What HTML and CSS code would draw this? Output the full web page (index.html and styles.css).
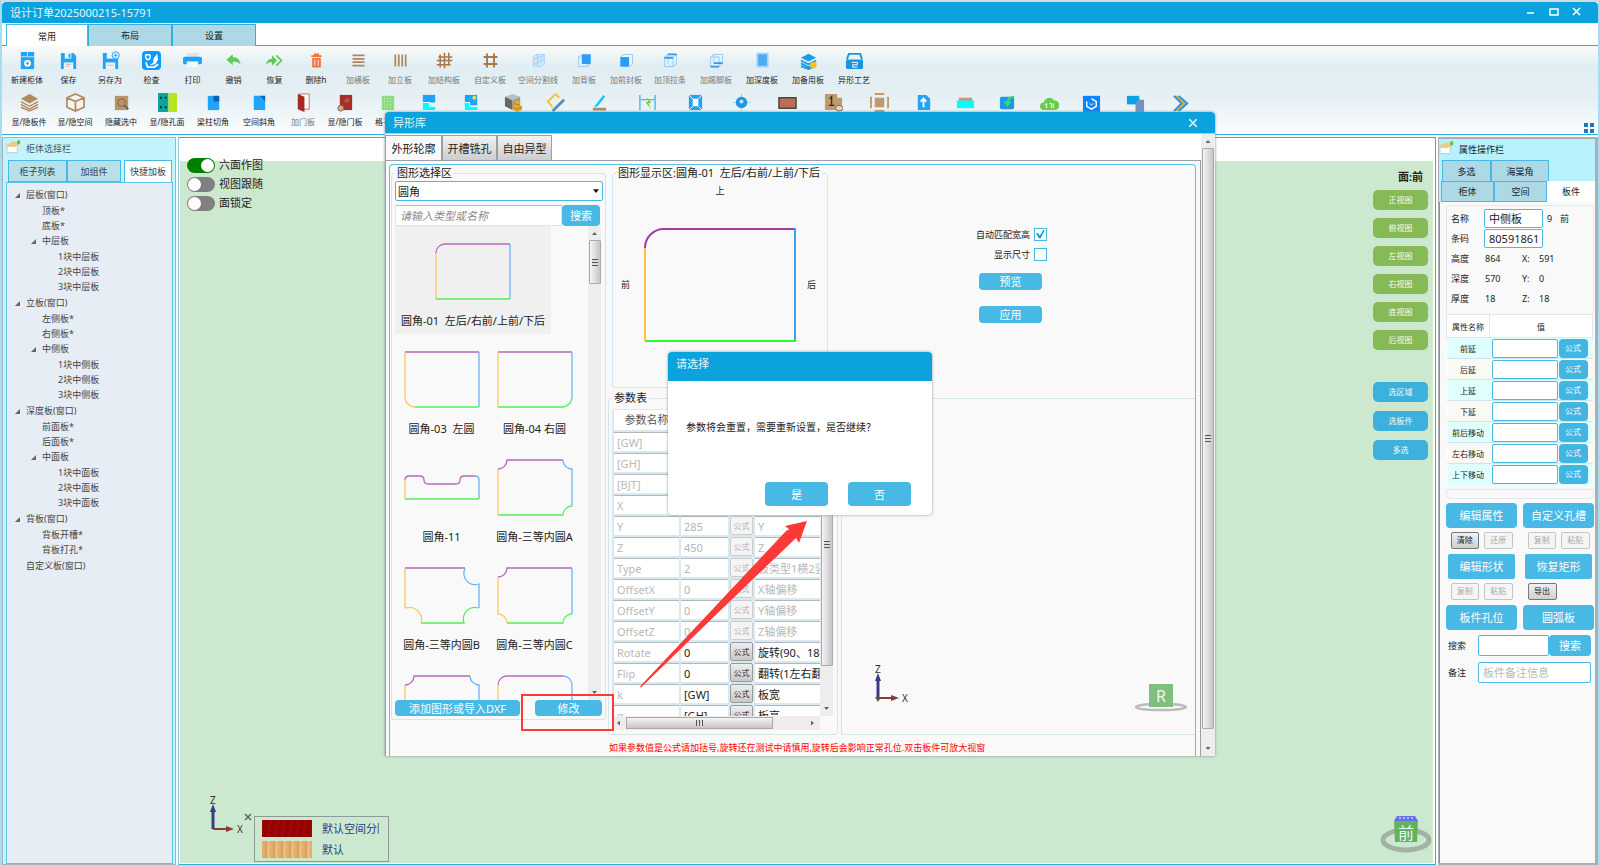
FILE: index.html
```html
<!DOCTYPE html>
<html lang="zh-CN">
<head>
<meta charset="utf-8">
<title>设计订单2025000215-15791</title>
<link rel="stylesheet" href="styles.css">
</head>
<body>
<div class="app">
  <header class="titlebar">
    <h1>设计订单2025000215-15791</h1>
    <div class="win-buttons">
      <button aria-label="最小化"><svg viewBox="0 0 10 10"><path d="M1 6h7" stroke="#fff" stroke-width="1.5"/></svg></button>
      <button aria-label="最大化"><svg viewBox="0 0 10 10"><path d="M1 2h8v6H1z" fill="none" stroke="#fff" stroke-width="1.5"/></svg></button>
      <button aria-label="关闭"><svg viewBox="0 0 10 10"><path d="M1 1l7 7M8 1l-7 7" stroke="#fff" stroke-width="1.5"/></svg></button>
    </div>
  </header>
  <nav class="menu-tabs">
    <button class="on">常用</button><button>布局</button><button>设置</button>
  </nav>

  <section class="toolbar">
    <div class="tool-row">
      <button class="tool"><svg viewBox="0 0 20 20"><path d="M3 1h14v18H3z" fill="#1fa4fb"/><path d="M3 6h14M10 1v5" stroke="#bfe4fd"/><circle cx="10" cy="13" r="3.6" fill="#fff"/><path d="M10 11v4M8 13h4" stroke="#1fa4fb"/></svg>新建柜体</button>
      <button class="tool w41"><svg viewBox="0 0 20 20"><path d="M2 2h13l3 3v14H2z" fill="#1fa4fb"/><path d="M6 2h7v6H6z" fill="#eaf4fa"/><path d="M10 3h2v4h-2z" fill="#1fa4fb"/><path d="M5 12h10v7H5z" fill="#eef3f5"/><path d="M7 14h6M7 16h4" stroke="#bbb"/></svg>保存</button>
      <button class="tool"><svg viewBox="0 0 20 20"><path d="M2 2h13l3 3v14H2z" fill="#1fa4fb"/><path d="M6 2h7v6H6z" fill="#eaf4fa"/><path d="M5 12h10v7H5z" fill="#eef3f5"/><path d="M7 15h6" stroke="#bbb"/><circle cx="15.500" cy="4.500" r="3.800" fill="#e8f5ff" stroke="#1fa4fb"/><path d="M15.500 2.500v4M13.500 4.500h4" stroke="#1fa4fb"/></svg>另存为</button>
      <button class="tool w41"><svg viewBox="0 0 20 20"><rect x="0" y="0" width="20" height="20" rx="4" fill="#0f9bfb"/><path d="M4 4h4q2 3-1 5H5q-2-3-1-5z" fill="none" stroke="#fff" stroke-width="1.500"/><path d="M9 9l3-2M12 8l4-5 1 6-3 5-6 1 4-3z" fill="#fff"/><path d="M4 12l2 5h7l4-3" fill="none" stroke="#fff" stroke-width="1.800"/></svg>检查</button>
      <button class="tool w41"><svg viewBox="0 0 20 20"><path d="M4 2h12v5H4z" fill="#dde3e6"/><rect y="6" width="20" height="8" rx="2" fill="#1fa4fb"/><path d="M4 11h12v6H4z" fill="#f5f7f8"/></svg>打印</button>
      <button class="tool w41"><svg viewBox="-2 -1 24 24"><path d="M1 10l8-7v4c6 0 9 3 10 9-3-3-6-4-10-3v4z" fill="#62c956"/></svg>撤销</button>
      <button class="tool w41"><svg viewBox="-1 -1 22 22"><path d="M13 10L7 4v4c-4 0-6 3-7 7 3-3 4-3 7-3v4z" fill="#62c956"/><path d="M12 4l6 6-6 6" fill="none" stroke="#62c956" stroke-width="2"/></svg>恢复</button>
      <button class="tool"><svg viewBox="-1 -1 22 22"><path d="M4 5h12M8 4V3h4v1" stroke="#f4713c" stroke-width="2" fill="none"/><path d="M5 7h10v11H5z" fill="#f4713c"/><path d="M8 9v7M12 9v7" stroke="#fff"/></svg>删除h</button>
      <button class="tool dim"><svg viewBox="-1 -1 22 22"><path d="M3 4h14M3 8h14M3 12h14M3 16h14" stroke="#ab8764" stroke-width="2"/></svg>加横板</button>
      <button class="tool dim"><svg viewBox="-1 -1 22 22"><path d="M4 3v14M8 3v14M12 3v14M16 3v14" stroke="#ab8764" stroke-width="2"/></svg>加立板</button>
      <button class="tool w46 dim"><svg viewBox="-1 -1 22 22"><path d="M5 3v15M10 1v18M15 1v15M3 6h16M1 10h18M1 15h16" stroke="#ab7747" stroke-width="1.800"/></svg>加结构板</button>
      <button class="tool w46 dim"><svg viewBox="-1 -1 22 22"><path d="M6 2v16M14 2v16M2 6h16M2 14h16" stroke="#ab7747" stroke-width="2.200"/></svg>自定义板</button>
      <button class="tool w50 dim"><svg viewBox="-1 -1 22 22"><path d="M4 6l3-3h10v11l-3 3H4z" fill="#cfe6fa" stroke="#9fcdf7" stroke-dasharray="3 1"/><path d="M4 9l13-5M4 15L17 8M9 17V3" stroke="#9fcdf7"/></svg>空间分割线</button>
      <button class="tool dim"><svg viewBox="-1 -1 22 22"><path d="M3 6l4-3h10v11l-4 3H3zM3 6h10v11" fill="none" stroke="#8fc7f8"/><path d="M7 3h10v11H7z" fill="#2b9cf7"/></svg>加背板</button>
      <button class="tool dim"><svg viewBox="-1 -1 22 22"><path d="M3 6l4-3h10v11l-4 3H3z" fill="#eef6fd" stroke="#8fc7f8"/><path d="M3 6h10v11H3z" fill="#2b9cf7"/></svg>加前封板</button>
      <button class="tool w46 dim"><svg viewBox="-1 -1 22 22"><path d="M3 6l4-3h10v11l-4 3H3zM3 6h10v11M7 3v11M13 6l4-3" fill="none" stroke="#8fc7f8"/><path d="M3 7h10M7 3h10" stroke="#2b9cf7" stroke-width="2"/></svg>加顶拉条</button>
      <button class="tool w46 dim"><svg viewBox="-1 -1 22 22"><path d="M3 6l4-3h10v11l-4 3H3zM3 6h10v11M7 3v11" fill="none" stroke="#8fc7f8"/><path d="M3 17h10M7 13h10" stroke="#2b9cf7" stroke-width="2"/></svg>加踢脚板</button>
      <button class="tool w46"><svg viewBox="-1 -1 22 22"><path d="M4 2h12v15H4z" fill="#4aabf5" stroke="#9fd0f8" stroke-width="2"/></svg>加深度板</button>
      <button class="tool w46"><svg viewBox="0 -1 20 20"><path d="M2 6l8-4 8 4-8 4z" fill="#1a9de6"/><path d="M2 9l8 4 8-4M2 12l8 4 8-4M2 15l8 3 5-2" fill="none" stroke="#1a9de6" stroke-width="2"/><circle cx="15" cy="14" r="3.500" fill="#f1c232"/></svg>加备用板</button>
      <button class="tool w46"><svg viewBox="0 0 20 20"><path d="M2 9l2-6h12l2 6" fill="none" stroke="#1a95dd" stroke-width="2"/><rect x="1" y="9" width="18" height="10" rx="2" fill="#1a95dd"/><path d="M7 12h6v2.500H8V17h5" fill="none" stroke="#fff"/></svg>异形工艺</button>
    </div>
    <div class="tool-row">
      <button class="tool w46"><svg viewBox="0 0 20 20"><path d="M1 6l9-5 9 5-9 5z" fill="#b18a5f"/><path d="M1 9l9 5 9-5M1 12l9 5 9-5M1 15l9 4 9-4" fill="none" stroke="#b18a5f" stroke-width="1.500"/></svg>显/隐板件</button>
      <button class="tool w46"><svg viewBox="0 0 20 20"><path d="M1 5l9-4 9 4v10l-9 4-9-4zM1 5l9 4 9-4M10 9v10" fill="#f7f3ee" stroke="#b18a5f" stroke-width="1.800"/></svg>显/隐空间</button>
      <button class="tool w46"><svg viewBox="0 0 20 20"><path d="M3 3h14v15H3z" fill="#b9946a"/><circle cx="10" cy="10" r="4" fill="none" stroke="#7d5f3f"/><path d="M13 13l4 4" stroke="#7d5f3f" stroke-width="2"/></svg>隐藏选中</button>
      <button class="tool w46"><svg viewBox="0 0 20 20"><path d="M0 0h11v20H0z" fill="#0ea5a1"/><path d="M11 0h9v20h-9z" fill="#b5e61d"/><path d="M3 4v2M8 4v2M3 14v2M8 14v2" stroke="#123" stroke-width="2"/></svg>显/隐孔面</button>
      <button class="tool w46"><svg viewBox="0 0 20 20"><path d="M4 3h12v15H4z" fill="#1fa4fb"/><path d="M10 3h6v6h-6z" fill="#0b62b5"/></svg>梁柱切角</button>
      <button class="tool w46"><svg viewBox="0 0 20 20"><path d="M4 3h6l6 6v9H4z" fill="#1fa4fb"/><path d="M10 3h6v6z" fill="#0b62b5"/></svg>空间斜角</button>
      <button class="tool dim"><svg viewBox="0 0 20 20"><path d="M5 1h11v16H5z" fill="#fff" stroke="#c66"/><path d="M4 1l7 3v16l-7-3z" fill="#a52a20"/></svg>加门板</button>
      <button class="tool"><svg viewBox="0 0 20 20"><path d="M4 2h13v16H4z" fill="#a5302a"/><path d="M9 9l4-4M11 10l3-3" stroke="#e08a80"/><circle cx="5" cy="16" r="3" fill="#cdb28c" stroke="#765"/></svg>显/隐门板</button>
      <button class="tool"><svg viewBox="0 0 20 20"><path d="M4 3h13v15H4z" fill="#86d977"/><path d="M4 6h13M4 9h13M4 12h13M4 15h13M7 3v15M10 3v15M13 3v15" stroke="#b8ecae" stroke-dasharray="1 1"/></svg>格子架</button>
      <button class="tool" aria-label="切割"><svg viewBox="0 0 20 20"><path d="M3 2h13v8H3z" fill="#1fa4fb"/><path d="M3 10h7v4h6v4H3z" fill="#0ff"/><path d="M3 10h7v4h6" stroke="#fff" fill="none"/></svg></button>
      <button class="tool" aria-label="补板"><svg viewBox="0 0 20 20"><path d="M3 2h13v11H3z" fill="#1fa4fb"/><path d="M3 10h5v4h8v4H3z" fill="#0ff"/><path d="M3 10h5v4h8" stroke="#fff" fill="none"/><circle cx="13" cy="5" r="2" fill="#ffe21a"/></svg></button>
      <button class="tool" aria-label="五金"><svg viewBox="0 0 20 20"><path d="M1 4l8-3 8 3-8 4z" fill="#bbb"/><path d="M1 4l8 4v10l-8-4z" fill="#666"/><path d="M9 8l8-4v8l-8 6z" fill="#999"/><path d="M9 14l2-1V9l4-2 2 3v3l2 1v4l-5 2-5-2z" fill="#e8ab24"/><path d="M9 15l5 2 5-2M11 11l6 2" stroke="#b97d10" fill="none"/></svg></button>
      <button class="tool" aria-label="测量"><svg viewBox="0 0 20 20"><path d="M10 1L2 9l5 6" fill="none" stroke="#f2c12e" stroke-width="2"/><path d="M10 1l4 4" stroke="#f2c12e" stroke-width="2"/><path d="M7 19L19 7" stroke="#5b8fb0" stroke-width="3"/></svg></button>
      <button class="tool w46" aria-label="斜切"><svg viewBox="0 0 20 20"><path d="M3 17h14" stroke="#b28a72" stroke-width="3"/><path d="M4 15L14 2l2 2-8 10z" fill="#19c3ff"/></svg></button>
      <button class="tool w50" aria-label="间距"><svg viewBox="0 0 20 20"><path d="M2 2v16M18 2v16M3 7h14" stroke="#5ab3e6" stroke-width="1.500"/><path d="M9 4l5 6-3 1 3 6-6-7 3-1z" fill="#6bd34a"/></svg></button>
      <button class="tool w46" aria-label="边框"><svg viewBox="0 0 20 20"><path d="M3 2h14v16H3z" fill="#1fa4fb"/><path d="M7 6h6v8H7z" fill="#fff"/><path d="M3 2l4 4M17 2l-4 4M3 18l4-4M17 18l-4-4" stroke="#fff"/></svg></button>
      <button class="tool w46" aria-label="定位"><svg viewBox="0 0 20 20"><path d="M10 1v18M1 10h18" stroke="#7fd4fa"/><circle cx="10" cy="10" r="6" fill="#1f97e8"/><circle cx="10" cy="9" r="2" fill="#c9ecff"/></svg></button>
      <button class="tool w46" aria-label="矩形"><svg viewBox="0 0 20 20"><path d="M1 5h18v11H1z" fill="#b97052" stroke="#444" stroke-width="1.500"/></svg></button>
      <button class="tool w46" aria-label="编号"><svg viewBox="0 0 20 20"><path d="M1 1h13v4h5v13H1z" fill="#bf9a6c"/><path d="M6 6l2-2v9M5 13h6" stroke="#333" stroke-width="1.500" fill="none"/><ellipse cx="16" cy="16" rx="4" ry="3" fill="#e5d5ba" stroke="#765"/></svg></button>
      <button class="tool w46" aria-label="封边"><svg viewBox="0 0 20 20"><path d="M5 5h10v10H5z" fill="#bf9a6c"/><path d="M5 1h10M5 19h10M1 4v12M19 4v12" stroke="#bf9a6c" stroke-width="2"/></svg></button>
      <button class="tool" aria-label="导出文件"><svg viewBox="0 0 20 20"><path d="M4 2h9l4 4v12H4z" fill="#1fa4fb"/><path d="M10 15V7M7 9l3-3 3 3" stroke="#fff" stroke-width="2" fill="none"/></svg></button>
      <button class="tool" aria-label="台面"><svg viewBox="0 0 20 20"><path d="M3 5h14v4H3z" fill="#bf9a7c"/><path d="M1 8h18v8H1z" fill="#0ff"/></svg></button>
      <button class="tool" aria-label="导入"><svg viewBox="0 0 20 20"><rect x="2" y="4" width="15" height="13" rx="2" fill="#1f97e8"/><path d="M17 4c-5 0-7 2-7 7M7 9l3 4 3-4" stroke="#33e06d" stroke-width="2" fill="none"/></svg></button>
      <button class="tool" aria-label="云端"><svg viewBox="0 0 20 20"><path d="M4 18a4 4 0 0 1 0-8 6 6 0 0 1 11-2 5 5 0 0 1 1 10z" fill="#6bcb4d"/><path d="M7 16v-5l-2 2M10 11h2v5M14 11v5" stroke="#fff" fill="none"/></svg></button>
      <button class="tool" aria-label="渲染"><svg viewBox="0 0 20 20"><path d="M1 3h18v17H1z" fill="#0a84ff"/><path d="M10 6l5 3v5l-5 3-5-3V9" fill="none" stroke="#fff" stroke-width="1.500"/><path d="M8 11q2 3 4 0" fill="none" stroke="#fff"/></svg></button>
      <button class="tool w46" aria-label="复制板"><svg viewBox="0 0 20 20"><path d="M1 3h13v9H1z" fill="#08a2ea"/><path d="M10 10l3-3h6v13h-9z" fill="#6e93c5"/></svg></button>
      <button class="tool w46" aria-label="更多"><svg viewBox="0 0 20 20"><path d="M2 3h4l9 8-9 8H2l8-8z" fill="#f0a92b"/><path d="M2 3l8 8-8 8M7 3l9 8-9 8" fill="none" stroke="#1f97e8" stroke-width="2"/></svg></button>
    </div>
    <button class="grid-btn" aria-label="布局切换"><svg viewBox="0 0 10 10"><path d="M0 0h4v4H0zM6 0h4v4H6zM0 6h4v4H0zM6 6h4v4H6z" fill="#1f78bd"/></svg></button>
  </section>

  <main class="work">
    <aside class="sidebar">
      <h2 class="panel-title"><svg viewBox="0 0 16 14"><path d="M1 4h11v9H1z" fill="#fff" stroke="#b9cbd6"/><path d="M1 5l6-4h7l1 3-6 3H2z" fill="#f0c987"/><path d="M12 0h3v4h-3z" fill="#5dc24b"/></svg>柜体选择栏</h2>
      <div class="side-tabs"><button>柜子列表</button><button>加组件</button><button class="on">快捷加板</button></div>
      <div class="tree">
        <ul>
          <li><span class="node">层板(窗口)</span>
            <ul><li>顶板*</li><li>底板*</li><li><span class="node">中层板</span><ul><li>1块中层板</li><li>2块中层板</li><li>3块中层板</li></ul></li></ul></li>
          <li><span class="node">立板(窗口)</span>
            <ul><li>左侧板*</li><li>右侧板*</li><li><span class="node">中侧板</span><ul><li>1块中侧板</li><li>2块中侧板</li><li>3块中侧板</li></ul></li></ul></li>
          <li><span class="node">深度板(窗口)</span>
            <ul><li>前面板*</li><li>后面板*</li><li><span class="node">中面板</span><ul><li>1块中面板</li><li>2块中面板</li><li>3块中面板</li></ul></li></ul></li>
          <li><span class="node">背板(窗口)</span>
            <ul><li>背板开槽*</li><li>背板打孔*</li></ul></li>
          <li>自定义板(窗口)</li>
        </ul>
      </div>
    </aside>

    <section class="viewport">
      <div class="view-head"></div>
      <div class="canvas">
        <div class="toggles">
          <label><input type="checkbox" checked>六面作图</label>
          <label><input type="checkbox">视图跟随</label>
          <label><input type="checkbox">面锁定</label>
        </div>
        <div class="view-side">
          <strong>面:前</strong>
          <div class="view-btns green"><button>正视图</button><button>俯视图</button><button>左视图</button><button>右视图</button><button>底视图</button><button>后视图</button></div>
          <div class="view-btns blue"><button>选区域</button><button>选板件</button><button>多选</button></div>
        </div>
        <div class="canvas-foot">
          <svg class="axis" viewBox="0 0 40 44"><path d="M7 35V16" stroke="#3a3a86" stroke-width="3"/><path d="M4 18l3-8 3 8z" fill="#3a3a86"/><path d="M7 35h16" stroke="#8a3c3c" stroke-width="2"/><path d="M20 32l8 3-8 3z" fill="#8a3c3c"/><text x="4" y="10">Z</text><text x="31" y="39">X</text></svg>
          <button class="legend-close" aria-label="关闭图例"><svg viewBox="0 0 8 8"><path d="M1 1l6 6M7 1L1 7" stroke="#555" stroke-width="1.200"/></svg></button>
          <div class="legend"><div><i class="sw red"></i><span>默认空间分隔</span></div><div><i class="sw wood"></i><span>默认</span></div></div>
          <svg class="cube" viewBox="0 0 54 40"><ellipse cx="27" cy="25" rx="23" ry="10" fill="none" stroke="#a3b3a3" stroke-width="5"/><path d="M18 1h18l3 5H15z" fill="#6670ea"/><path d="M20 3h14" stroke="#fff" stroke-dasharray="2 2"/><path d="M15 6h24l-1 21H16z" fill="#5fb45f"/><text x="19" y="24" class="cube-text">前</text></svg>
        </div>
      </div>
    </section>

    <aside class="props">
      <div class="props-head">
        <h2 class="panel-title"><svg viewBox="0 0 16 14"><path d="M1 4h11v9H1z" fill="#fff" stroke="#b9cbd6"/><path d="M1 5l6-4h7l1 3-6 3H2z" fill="#f0c987"/><path d="M12 0h3v4h-3z" fill="#5dc24b"/></svg>属性操作栏</h2>
        <div class="prop-tabs first"><button>多选</button><button>海棠角</button></div>
        <div class="prop-tabs"><button>柜体</button><button>空间</button><button class="on">板件</button></div>
      </div>
      <div class="props-body">
        <div class="info">
          <label for="p-name">名称</label><input id="p-name" value="中侧板"><span class="tail">9</span><span>前</span>
          <label for="p-code">条码</label><input id="p-code" value="80591861"><span></span><span></span>
          <span>高度</span><span class="num">864</span><span class="ax">X:</span><span>591</span>
          <span>深度</span><span class="num">570</span><span class="ax">Y:</span><span>0</span>
          <span>厚度</span><span class="num">18</span><span class="ax">Z:</span><span>18</span>
        </div>
        <table class="attr">
          <colgroup><col class="a1"><col class="a2"><col></colgroup>
          <thead><tr><th>属性名称</th><th colspan="2">值</th></tr></thead>
          <tbody>
            <tr><td>前延</td><td><input aria-label="前延"></td><td><button>公式</button></td></tr>
            <tr><td>后延</td><td><input aria-label="后延"></td><td><button>公式</button></td></tr>
            <tr><td>上延</td><td><input aria-label="上延"></td><td><button>公式</button></td></tr>
            <tr><td>下延</td><td><input aria-label="下延"></td><td><button>公式</button></td></tr>
            <tr><td>前后移动</td><td><input aria-label="前后移动"></td><td><button>公式</button></td></tr>
            <tr><td>左右移动</td><td><input aria-label="左右移动"></td><td><button>公式</button></td></tr>
            <tr><td>上下移动</td><td><input aria-label="上下移动"></td><td><button>公式</button></td></tr>
          </tbody>
        </table>
        <div class="strip"></div>
        <div class="acts">
          <button class="big">编辑属性</button><button class="big">自定义孔槽</button>
          <div class="minis"><button>清除</button><button disabled>还原</button></div><div class="minis"><button disabled>复制</button><button disabled>粘贴</button></div>
          <button class="big square">编辑形状</button><button class="big square">恢复矩形</button>
          <div class="minis"><button disabled>复制</button><button disabled>粘贴</button></div><div class="minis"><button>导出</button></div>
          <button class="big">板件孔位</button><button class="big">圆弧板</button>
        </div>
        <div class="line"><label for="p-search">搜索</label><input id="p-search"><button>搜索</button></div>
        <div class="line"><label for="p-note">备注</label><input id="p-note" placeholder="板件备注信息"></div>
      </div>
    </aside>
  </main>
</div>

<section class="dialog" role="dialog" aria-label="异形库">
  <header class="dialog-title"><h2>异形库</h2><button aria-label="关闭"><svg viewBox="0 0 8 8"><path d="M0 0l8 8M8 0L0 8" stroke="#e6f6fd" stroke-width="1.500"/></svg></button></header>
  <div class="dialog-body">
    <div class="dialog-main">
      <div class="dialog-tabs"><button class="on">外形轮廓</button><button>开槽铣孔</button><button>自由异型</button></div>
      <div class="page"><div class="frame">
        <fieldset class="picker">
          <legend>图形选择区</legend>
          <div class="combo"><select aria-label="图形类别"><option>圆角</option></select><svg viewBox="0 0 8 5"><path d="M0 0h8L4 5z" fill="#111"/></svg></div>
          <div class="find"><input placeholder="请输入类型或名称" aria-label="类型或名称"><button>搜索</button></div>
          <div class="list-wrap">
            <div class="shapes">
              <div class="shape sel"><svg viewBox="0 0 76 57"><path class="p" d="M1 10a9 9 0 0 1 9-9h65"/><path class="b" d="M75 1v55"/><path class="g" d="M75 56H1"/><path class="o" d="M1 56V10"/></svg><span>圆角-01&nbsp; 左后/右前/上前/下后</span></div>
              <div class="shape"><svg viewBox="0 0 76 57"><path class="p" d="M1 1h74"/><path class="b" d="M75 1v55"/><path class="g" d="M75 56H11"/><path class="o" d="M11 56a10 10 0 0 1-10-10V1"/></svg><span>圆角-03&nbsp; 左圆</span></div>
              <div class="shape"><svg viewBox="0 0 76 57"><path class="p" d="M1 1h74"/><path class="b" d="M75 1v45"/><path class="g" d="M75 46a10 10 0 0 1-10 10H1"/><path class="o" d="M1 56V1"/></svg><span>圆角-04 右圆</span></div>
              <div class="shape"><svg viewBox="0 0 76 57"><path class="p" d="M1 21q0-4 4-4h11q4 0 4 4 0 4 4 4h28q4 0 4-4 0-4 4-4h11"/><path class="b" d="M71 17q4 0 4 4v19"/><path class="g" d="M75 40H1"/><path class="o" d="M1 40V21"/></svg><span>圆角-11</span></div>
              <div class="shape"><svg viewBox="0 0 76 57"><path class="p" d="M1 10a9 9 0 0 0 9-9h56"/><path class="b" d="M66 1a9 9 0 0 0 9 9v37"/><path class="g" d="M75 47a9 9 0 0 0-9 9H1"/><path class="o" d="M1 56V10"/></svg><span>圆角-三等内圆A</span></div>
              <div class="shape"><svg viewBox="0 0 76 57"><path class="p" d="M1 1h60"/><path class="b" d="M61 1c-4 10 4 19 14 16v24"/><path class="g" d="M75 41c-10-3-18 6-15 15H17"/><path class="o" d="M17 56c3-9-6-18-16-15V1"/></svg><span>圆角-三等内圆B</span></div>
              <div class="shape"><svg viewBox="0 0 76 57"><path class="p" d="M1 10a9 9 0 0 0 9-9h65"/><path class="b" d="M75 1v46"/><path class="g" d="M75 47a9 9 0 0 0-9 9H10"/><path class="o" d="M10 56a9 9 0 0 0-9-9V10"/></svg><span>圆角-三等内圆C</span></div>
              <div class="shape"><svg viewBox="0 0 76 57"><path class="p" d="M1 10a9 9 0 0 0 9-9h56"/><path class="b" d="M66 1a9 9 0 0 0 9 9v46"/><path class="g" d="M75 56H1"/><path class="o" d="M1 56V10"/></svg></div>
              <div class="shape"><svg viewBox="0 0 76 57"><path class="p" d="M1 10a9 9 0 0 1 9-9h56"/><path class="b" d="M66 1a9 9 0 0 1 9 9v46"/><path class="g" d="M75 56H1"/><path class="o" d="M1 56V10"/></svg></div>
            </div>
            <div class="vbar"><i class="up"></i><i class="thumb short"></i><i class="down"></i></div>
          </div>
          <div class="pick-acts"><button>添加图形或导入DXF</button><button class="modify">修改</button></div>
        </fieldset>

        <div class="detail">
          <div class="upper">
            <fieldset class="preview">
              <legend>图形显示区:圆角-01&nbsp; 左后/右前/上前/下后</legend>
              <div class="compass"><span class="top">上</span><span>前</span>
                <svg viewBox="0 0 152 115"><path class="P" d="M1 21a19 19 0 0 1 19-19h131"/><path class="B" d="M151 1v113"/><path class="G" d="M152 114H1"/><path class="O" d="M1 114V21"/></svg>
                <span>后</span></div>
            </fieldset>
            <div class="options">
              <label>自动匹配宽高<input type="checkbox" checked></label>
              <label>显示尺寸<input type="checkbox"></label>
              <button>预览</button><button>应用</button>
            </div>
          </div>
          <div class="lower">
            <fieldset class="params">
              <legend>参数表</legend>
              <div class="grid-wrap">
                <div class="grid-clip">
                  <table>
                    <colgroup><col class="c1"><col class="c2"><col class="c3"><col class="c4"></colgroup>
                    <thead><tr><th>参数名称</th><th>值</th><th></th><th>描述</th></tr></thead>
                    <tbody>
                      <tr class="off"><td>[GW]</td><td></td><td></td><td></td></tr>
                      <tr class="off"><td>[GH]</td><td></td><td></td><td></td></tr>
                      <tr class="off"><td>[BJT]</td><td></td><td></td><td></td></tr>
                      <tr class="off"><td>X</td><td></td><td></td><td></td></tr>
                      <tr class="off"><td>Y</td><td><input value="285" aria-label="Y" disabled></td><td><button disabled>公式</button></td><td>Y</td></tr>
                      <tr class="off"><td>Z</td><td><input value="450" aria-label="Z" disabled></td><td><button disabled>公式</button></td><td>Z</td></tr>
                      <tr class="off"><td>Type</td><td><input value="2" aria-label="Type" disabled></td><td><button disabled>公式</button></td><td>板类型1横2竖</td></tr>
                      <tr class="off"><td>OffsetX</td><td><input value="0" aria-label="OffsetX" disabled></td><td><button disabled>公式</button></td><td>X轴偏移</td></tr>
                      <tr class="off"><td>OffsetY</td><td><input value="0" aria-label="OffsetY" disabled></td><td><button disabled>公式</button></td><td>Y轴偏移</td></tr>
                      <tr class="off"><td>OffsetZ</td><td><input value="0" aria-label="OffsetZ" disabled></td><td><button disabled>公式</button></td><td>Z轴偏移</td></tr>
                      <tr><td>Rotate</td><td><input value="0" aria-label="Rotate"></td><td><button>公式</button></td><td>旋转(90、180)</td></tr>
                      <tr><td>Flip</td><td><input value="0" aria-label="Flip"></td><td><button>公式</button></td><td>翻转(1左右翻)</td></tr>
                      <tr><td>k</td><td><input value="[GW]" aria-label="k"></td><td><button>公式</button></td><td>板宽</td></tr>
                      <tr><td>g</td><td><input value="[GH]" aria-label="g"></td><td><button>公式</button></td><td>板高</td></tr>
                    </tbody>
                  </table>
                </div>
                <div class="vbar"><i class="up"></i><i class="thumb tall"></i><i class="down"></i></div>
                <div class="hbar"><i class="left"></i><i class="hthumb"></i><i class="right"></i></div>
              </div>
            </fieldset>
            <div class="scene">
              <svg class="axis" viewBox="0 0 40 44"><path d="M7 35V16" stroke="#3a3a86" stroke-width="3"/><path d="M4 18l3-8 3 8z" fill="#3a3a86"/><path d="M4 34h6l-3 5z" fill="#2f6b3a"/><path d="M7 35h16" stroke="#8a3c3c" stroke-width="2"/><path d="M20 32l8 3-8 3z" fill="#8a3c3c"/><text x="4" y="10">Z</text><text x="31" y="39">X</text></svg>
              <svg class="cube" viewBox="0 0 54 30"><ellipse cx="27" cy="25" rx="25" ry="3" fill="none" stroke="#bcbcbc" stroke-width="2.500"/><path d="M15 2h24v23H15z" fill="#7fbf7f"/><text x="22" y="20" class="cube-text">R</text></svg>
            </div>
          </div>
          <p class="warn">如果参数值是公式请加括号,旋转还在测试中请慎用,旋转后会影响正常孔位.双击板件可放大视窗</p>
        </div>
      </div></div>
    </div>
    <div class="vbar outer"><i class="up"></i><i class="thumb full"></i><i class="down"></i></div>
  </div>
</section>

<section class="confirm" role="alertdialog" aria-label="请选择">
  <h2>请选择</h2>
  <p>参数将会重置，需要重新设置，是否继续？</p>
  <div class="confirm-acts"><button>是</button><button>否</button></div>
</section>
<div class="mark"></div>
<svg class="arrow" viewBox="0 0 168 167"><path d="M0 166L149 8l-4-3 22-5-8 22-3-5z" fill="#fb3a37"/><path d="M0 165.500L147 9l8 8L1 166.500z" fill="#fb3a37"/></svg>
</body>
</html>
```
FILE: styles.css
```css
* { box-sizing: border-box; }
body, button, input, select { font-family: "Noto Sans", "Noto Sans CJK SC", sans-serif; }
body { margin: 0; color: #222; font-size: 11px; overflow: hidden; background: #fff; }
h1, h2, p, ul, fieldset, legend { margin: 0; padding: 0; font-weight: 400; }
ul { list-style: none; }
button { border: 0; padding: 0; background: none; font-size: 11px; line-height: 1; color: inherit; white-space: nowrap; }
input, select { min-width: 0; margin: 0; padding: 0 4px; border: 1px solid #48b9e5; border-radius: 2px; background: #fff; font-size: 11px; color: #222; }
svg { display: block; }

.app { display: flex; flex-direction: column; height: 100vh; border-left: 2px solid #a8dcf2; border-right: 2px solid #a8dcf2; border-top: 2px solid #d3d9dc; }
.titlebar { display: flex; justify-content: space-between; align-items: center; height: 21px; padding: 1px 16px 0 8px; background: #0aa3dd; border-radius: 4px 4px 0 0; color: #e8f6fd; }
.titlebar h1 { font-size: 11px; line-height: 18px; }
.win-buttons { display: flex; gap: 13px; padding-bottom: 2px; }
.win-buttons svg { width: 10px; height: 10px; }
.menu-tabs { display: flex; height: 23px; padding: 1px 0 0 4px; border-bottom: 1px solid #2fb0dc; }
.menu-tabs button { width: 84px; height: 22px; background: #add8e6; border: 1px solid #2fb0dc; border-width: 1px 1px 0; font-size: 9px; }
.menu-tabs .on { background: #fff; width: 82px; height: 23px; border-color: #48b9e5; }

.toolbar { display: flex; flex-direction: column; height: 89px; padding: 5px 0 0 4px; border-bottom: 1px solid #2fb0dc; background: linear-gradient(#fafbf8, #e0edf3 24%, #e6f0f4 60%, #fbfdfe); position: relative; }
.tool-row { display: flex; height: 42px; }
.tool { display: flex; flex: 0 0 42px; flex-direction: column; align-items: center; gap: 4px; font-size: 8px; line-height: 11px; }
.tool svg { width: 19px; height: 19px; }
.tool-row .w41 { flex-basis: 41px; }
.w46 { flex-basis: 46px; }
.w50 { flex-basis: 50px; }
.dim { color: #777; }
.grid-btn { position: absolute; right: 4px; bottom: 1px; }
.grid-btn svg { width: 10px; height: 10px; }

.work { display: flex; flex: 1; min-height: 0; gap: 2px; padding-top: 2px; }
.sidebar { display: flex; flex-direction: column; width: 174px; border: 1px solid #a3b4bd; background: #c4f4fb; padding: 0 2px 0 3px; }
.panel-title { display: flex; align-items: center; gap: 5px; height: 23px; font-size: 9px; line-height: 12px; }
.panel-title svg { width: 15px; height: 14px; margin-top: -4px; }
.sidebar .panel-title { height: 22px; color: #456; }
.side-tabs { display: flex; height: 22px; padding-left: 2px; }
.side-tabs button { width: 59px; border: 1px solid #48b9e5; background: #b9dfe9; font-size: 9px; color: #345; }
.side-tabs button + button { width: 54px; margin-right: 3px; }
.side-tabs .on { background: #fff; border-bottom: 0; }
.side-tabs button.on { width: 48px; margin: 0; }
.tree { flex: 1; padding: 4px 0 0 7px; border: 1px solid #5cc5ea; background: #e6edf5; }
.tree li { padding-left: 12px; font-size: 9px; line-height: 15px; color: #444; }
.tree ul ul li { padding-left: 16px; }
.tree > ul > li { margin-bottom: 1px; }
.node { display: block; line-height: 16px; }
.node::before { content: ""; float: left; width: 5px; height: 5px; margin: 6px 0 0 -11px; background: #666; clip-path: polygon(100% 0, 100% 100%, 0 100%); }

.viewport { display: flex; flex: 1; flex-direction: column; min-width: 0; padding: 0 2px 1px 1px; border: 1px solid #2fb0dc; border-left-color: #8ad0ee; }
.view-head { height: 23px; background: #fff; }
.canvas { display: flex; flex: 1; flex-wrap: wrap; justify-content: space-between; align-content: space-between; background: #cce8cf; }
.toggles { display: flex; flex-direction: column; gap: 3px; margin: -4px 0 0 7px; }
.toggles label { display: flex; align-items: center; gap: 4px; line-height: 16px; }
.toggles input { appearance: none; width: 28px; height: 15px; padding: 1px; border: 0; border-radius: 8px; background: #808080; }
.toggles input::before { content: ""; display: block; width: 13px; height: 13px; border-radius: 50%; background: #fff; }
.toggles input:checked { background: #008000; padding-left: 14px; }
.view-side { display: flex; flex-direction: column; align-items: flex-end; padding: 8px 5px 0 0; }
.view-side strong { margin: 0 5px 5px 0; line-height: 16px; }
.view-btns { display: flex; flex-direction: column; gap: 8px; }
.view-btns button { width: 55px; height: 20px; border-radius: 5px; color: #f4fbf0; font-size: 8px; }
.green button { background: #86ba56; }
.blue { margin-top: 32px; gap: 9px; }
.blue button { background: #3bb1dc; }
.canvas-foot { display: flex; width: 100%; align-items: flex-end; }
.axis { width: 40px; height: 44px; font-family: "Noto Sans"; font-size: 10px; fill: #333; }
.canvas .axis { margin: 0 0 25px 26px; }
.legend-close { margin: 0 2px 42px -2px; }
.legend-close svg { width: 8px; height: 8px; }
.legend { display: flex; flex-direction: column; gap: 4px; width: 135px; padding: 3px 9px 3px 7px; margin-bottom: 1px; border: 1px solid #8f9a94; color: #1f3f86; }
.legend div { display: flex; gap: 10px; height: 17px; line-height: 17px; white-space: nowrap; overflow: hidden; }
.legend span { overflow: hidden; }
.sw { flex: 0 0 50px; }
.red { background: repeating-linear-gradient(100deg, #a00505 0 3px, #920202 3px 7px); }
.wood { background: repeating-linear-gradient(90deg, #e3ae6c 0 3px, #d9a05c 3px 5px, #eabb7e 5px 8px); }
.canvas .cube { width: 54px; height: 40px; margin: 0 0 8px auto; }
.cube-text { font-family: "Noto Sans", "Noto Sans CJK SC", sans-serif; font-size: 16px; fill: #eef8ee; }

.props { display: flex; flex-direction: column; width: 160px; border: 2px solid #a9b0b5; border-width: 2px 1px; border-right-width: 3px; background: #f9f9f9; }
.props-head { background: #b7f1fc; }
.props .panel-title { height: 21px; }
.prop-tabs { display: flex; height: 21px; padding-left: 2px; }
.prop-tabs.first { padding-left: 3px; }
.prop-tabs button { width: 53px; border: 1px solid #48b9e5; background: #add8e6; font-size: 9px; }
.prop-tabs button.on { flex: 1; background: #fff; border: 0; }
.prop-tabs.first button { width: 49px; border-bottom: 0; }
.prop-tabs.first button + button { width: 58px; }
.props-body { display: flex; flex: 1; flex-direction: column; padding: 3px 1px 0 6px; border-left: 1px solid #2fb0dc; }
.info { display: grid; grid-template-columns: 33px 59px 17px 1fr; align-items: center; grid-auto-rows: 20px; padding: 2px 0 6px 4px; border: 1px solid #e3ebee; border-bottom: 0; border-radius: 3px; font-size: 9px; }
.info input { width: 59px; height: 19px; }
.num { padding-left: 1px; }
.tail { padding-left: 4px; }
.info .ax, .info .ax + span { margin-left: -21px; }
.attr { width: 147px; border-collapse: collapse; table-layout: fixed; font-size: 8px; background: #fff; }
.a1 { width: 43px; }
.a2 { width: 69px; }
.attr th { height: 23px; padding: 0; font-weight: 400; border: 1px solid #dde8ee; }
.attr td { height: 21px; padding: 0; border-top: 1px solid #cfe6ef; text-align: center; }
.attr tr:nth-child(odd) td { background: #e0ffff; }
.attr tr:nth-child(even) td { background: #faf9f3; }
.attr thead th { background: #fff; }
.attr input { display: block; width: 66px; height: 19px; margin-left: 2px; }
.attr td button { display: block; width: 29px; height: 19px; border-radius: 4px; background: #42b6e3; color: #fff; font-size: 8px; }
.strip { height: 10px; margin: 4px 0; border: 1px solid #dde8ee; border-radius: 3px; }
.acts { display: grid; grid-template-columns: 1fr 1fr; gap: 4px 6px; justify-items: center; }
.big { width: 71px; height: 25px; border-radius: 4px; background: #48b8e4; color: #fff; }
.square { width: 67px; border-radius: 2px; }
.minis { display: flex; gap: 5px; width: 62px; height: 18px; }
.minis button { width: 29px; height: 17px; border: 1px solid #777; border-radius: 2px; background: linear-gradient(#f0f0f0, #cfcfcf); font-size: 8px; }
.minis button:disabled { border-color: #c2c6c8; background: #f5f5f5; color: #aaa; }
.line { display: flex; align-items: center; height: 21px; margin: 5px 3px 1px 2px; font-size: 9px; }
.line label { flex: 0 0 30px; }
.line input { flex: 1; height: 21px; }
.line button { width: 42px; height: 21px; border-radius: 4px; background: #48b8e4; color: #fff; }
::placeholder { color: #b9b9b9; opacity: 1; }

.dialog { position: absolute; left: 385px; top: 112px; width: 830px; border-radius: 4px 4px 0 0; background: #fff; box-shadow: 0 0 3px #7d8f96; }
.dialog-title { display: flex; justify-content: space-between; align-items: center; height: 22px; padding: 0 18px 0 8px; border-bottom: 1px solid #8dd4f0; border-radius: 4px 4px 0 0; background: #0aa3dd; color: #e8f6fd; }
.dialog-title h2 { font-size: 11px; line-height: 20px; }
.dialog-title svg { width: 8px; height: 8px; }
.dialog-body { display: flex; }
.dialog-main { display: flex; flex: 1; flex-direction: column; min-width: 0; padding-top: 1px; }
.dialog-tabs { display: flex; height: 25px; }
.dialog-tabs button { width: 55px; border: 1px solid #999fa6; border-bottom: 0; background: linear-gradient(#f2f2f2, #cdcdcd); }
.dialog-tabs .on { width: 57px; height: 26px; background: #f9f9f9; }
.page { padding: 3px 4px 0 3px; border: 1px solid #999fa6; border-bottom: 0; background: #f9f9f9; }
.frame { display: flex; gap: 6px; padding-left: 1px; border: 1px solid #5bc0ea; border-bottom: 0; border-radius: 4px 4px 0 0; }
fieldset { min-width: 0; border: 1px solid #d6e4ec; border-radius: 3px; }
legend { padding: 0 2px; line-height: 16px; white-space: nowrap; }
.picker { width: 215px; height: 555px; padding: 0 3px; }
.combo { display: flex; align-items: center; width: 204px; }
.combo select { appearance: none; flex: 1; height: 20px; padding: 0 2px; }
.combo svg { width: 6px; height: 4px; margin-left: -10px; pointer-events: none; }
.find { display: flex; height: 21px; margin: 4px 0 0; width: 205px; }
.find input { flex: 1; border-color: #bbb #e3e3e3 #e3e3e3; border-radius: 0; font-style: italic; }
.find ::placeholder { color: #8a8a8a; }
.find button { width: 38px; border-radius: 4px; background: #48b8e4; color: #fff; }
.list-wrap { display: flex; justify-content: space-between; height: 474px; width: 206px; }
.shapes { display: flex; flex-wrap: wrap; align-content: flex-start; width: 188px; overflow: hidden; }
.shape { display: flex; flex-direction: column; align-items: center; width: 93px; height: 108px; padding-top: 17px; gap: 13px; line-height: 16px; white-space: nowrap; }
.shape svg { width: 76px; height: 57px; }
.sel { width: 156px; background: #f0f0f0; }
.shape path, .preview path { fill: none; stroke-width: 1.300; }
.preview path { stroke-width: 2; }
.p { stroke: #b56ab8; } .b { stroke: #6fb2f7; } .g { stroke: #52f052; } .o { stroke: #fbc765; }
.P { stroke: #a13da4; } .B { stroke: #3f9cf5; } .G { stroke: #2bfa2b; } .O { stroke: #fbc044; }
.pick-acts { display: flex; justify-content: space-between; width: 207px; height: 16px; }
.pick-acts button { width: 125px; height: 16px; border-radius: 4px; background: #48b8e4; color: #fff; }
.pick-acts .modify { width: 67px; }

.vbar { display: flex; flex-direction: column; align-items: center; width: 13px; background: #ededed; }
.vbar i { flex: none; }
.up, .down { width: 5px; height: 3px; margin: 6px 0 5px; background: #666; clip-path: polygon(50% 0, 100% 100%, 0 100%); }
.down { margin: auto 0 6px; clip-path: polygon(0 0, 100% 0, 50% 100%); }
.thumb { display: grid; place-items: center; width: 12px; border: 1px solid #aaa; border-radius: 1px; background: linear-gradient(90deg, #f4f4f4, #c6c6c9); }
.thumb::before { content: ""; width: 6px; height: 7px; background: repeating-linear-gradient(#555 0 1px, #ddd 1px 3px); }
.short { height: 44px; }
.tall { height: 243px; }
.full { height: 581px; }
.outer { width: 14px; }
.hbar { display: flex; align-items: center; width: 208px; height: 14px; background: #ededed; }
.left, .right { width: 3px; height: 5px; margin: 0 6px 0 5px; background: #666; clip-path: polygon(100% 0, 100% 100%, 0 50%); }
.right { margin-left: auto; clip-path: polygon(0 0, 100% 50%, 0 100%); }
.hthumb { display: grid; place-items: center; width: 147px; height: 12px; border: 1px solid #aaa; background: linear-gradient(#f4f4f4, #c6c6c9); }
.hthumb::before { content: ""; width: 7px; height: 6px; background: repeating-linear-gradient(90deg, #555 0 1px, #ddd 1px 3px); }

.detail { flex: 1; min-width: 0; }
.upper { display: flex; height: 225px; }
.preview { width: 216px; height: 223px; }
.preview legend { margin-left: 3px; }
.compass { display: grid; grid-template-columns: 31px 152px 31px; align-items: center; justify-items: center; font-size: 9px; line-height: 14px; }
.compass > :nth-child(2) { margin-right: 6px; }
.compass .top { grid-column: 1 / -1; margin: 3px 0 29px; }
.compass svg { width: 152px; height: 115px; }
.options { display: flex; flex: 1; flex-direction: column; align-items: flex-end; padding: 59px 148px 0 0; font-size: 9px; }
.options label { display: flex; align-items: center; gap: 4px; height: 20px; }
.options input { appearance: none; width: 13px; height: 13px; padding: 1px; border-radius: 0; }
.options input:checked::before { content: ""; display: block; width: 9px; height: 9px; background: #0a9ddb; clip-path: polygon(0 45%, 22% 38%, 42% 70%, 85% 0, 100% 0, 50% 100%, 36% 100%); }
.options button { width: 63px; height: 17px; margin: 9px 5px 7px 0; border-radius: 4px; background: #48b8e4; color: #fff; }
.lower { display: flex; gap: 3px; height: 345px; margin-left: -4px; }
.params { width: 230px; padding: 0 3px; }
.grid-wrap { display: flex; flex-wrap: wrap; padding-top: 3px; width: 222px; }
.grid-clip { width: 208px; height: 307px; overflow: hidden; }
.grid-clip + .vbar { height: 307px; }
.grid-clip table { width: 246px; table-layout: fixed; border-collapse: separate; border-spacing: 2px; background: #d8e9f2; margin-top: -1px; }
.c1 { width: 65px; } .c2 { width: 47px; } .c3 { width: 23px; }
.grid-clip th { height: 20px; padding: 0; background: #fff; font-size: 11px; line-height: 16px; font-weight: 400; color: #555; }
.grid-clip td { height: 19px; padding: 0 0 0 3px; border-top: 1px solid #b2b7ba; background: #fff; line-height: 17px; white-space: nowrap; }
.grid-clip td:first-child, .off td { color: #b9b9b9; }
.grid-clip td:nth-child(3) { padding: 0; border: 0; }
.grid-clip td input { display: block; width: 100%; height: 17px; padding: 0; border: 0; line-height: 17px; }
.grid-clip input:disabled { color: #b5b5b5; background: #fff; }
.grid-clip td button { display: block; width: 23px; height: 19px; border: 1px solid #999; border-radius: 2px; background: linear-gradient(#eee, #c8c8c8); font-size: 8px; }
.grid-clip td button:disabled { border-color: #ccc; background: #f4f4f4; color: #b0b0b0; }
.scene { display: flex; flex: 1; justify-content: space-between; align-items: flex-end; margin-top: 8px; padding: 0 7px 22px 29px; border: 1px solid #d6e4ec; border-right: 0; }
.scene .axis { margin-bottom: 5px; }
.scene .cube { width: 54px; height: 30px; }
.warn { margin-left: -3px; padding: 4px 0 0; font-size: 9px; line-height: 17px; color: #f00; white-space: nowrap; }

.confirm { position: absolute; left: 668px; top: 352px; width: 264px; padding-bottom: 9px; border-radius: 4px; background: #fff; box-shadow: 0 0 3px #8b979d; overflow: hidden; }
.confirm h2 { padding: 0 8px; background: #0aa3dd; color: #e8f6fd; font-size: 11px; line-height: 24px; height: 29px; }
.confirm p { padding: 36px 18px 44px; font-size: 10px; line-height: 21px; }
.confirm-acts { display: flex; justify-content: flex-end; gap: 20px; padding-right: 21px; }
.confirm-acts button { width: 63px; height: 24px; border-radius: 4px; background: #48b8e4; color: #fff; }
.mark { position: absolute; left: 521px; top: 694px; width: 93px; height: 37px; border: 2px solid #fb3a37; }
.arrow { position: absolute; left: 640px; top: 521px; width: 168px; height: 167px; }
```
